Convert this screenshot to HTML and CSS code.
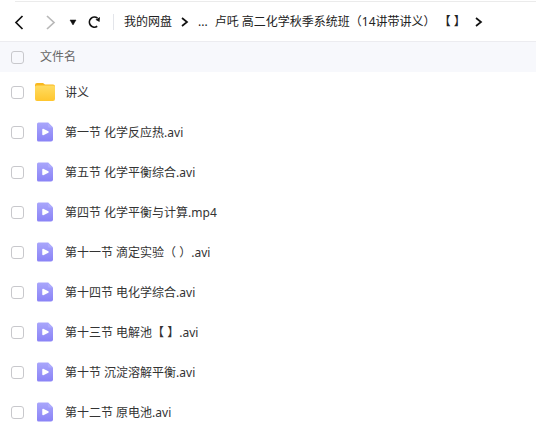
FILE: index.html
```html
<!DOCTYPE html>
<html lang="zh-CN">
<head>
    <meta charset="UTF-8">
    <meta name="viewport" content="width=device-width, initial-scale=1.0">
    <title>我的网盘</title>
    <link rel="stylesheet" href="styles.css">
</head>
<body>

    <!-- 图标 -->
    <svg class="sprite" aria-hidden="true">
        <defs>
            <linearGradient id="video-fill" x1="0" y1="0" x2="0" y2="1">
                <stop offset="0" stop-color="#a9a6fb"/>
                <stop offset="1" stop-color="#8a83f6"/>
            </linearGradient>
            <linearGradient id="folder-fill" x1="0" y1="0" x2="0" y2="1">
                <stop offset="0" stop-color="#ffdc62"/>
                <stop offset="1" stop-color="#ffc62e"/>
            </linearGradient>
            <symbol id="icon-video" viewBox="0 0 20 20">
                <path d="M3.500.500H13L18 5.500v12a2 2 0 0 1-2 2H3.500a1.500 1.500 0 0 1-1.500-1.500V2A1.500 1.500 0 0 1 3.500.500z" fill="url(#video-fill)"/>
                <path d="M13 .500L18 5.500h-3.500A1.500 1.500 0 0 1 13 4z" fill="#aeabfc"/>
                <path d="M8 7.500l5 2.500-5 2.500z" fill="#fff" stroke="#fff" stroke-width="1.500" stroke-linejoin="round"/>
            </symbol>
            <symbol id="icon-folder" viewBox="0 0 20 20">
                <path d="M0 3a2 2 0 0 1 2-2h6l2 1.500h8a2 2 0 0 1 2 2V12H0z" fill="#f9b81e"/>
                <path d="M0 5a1.500 1.500 0 0 1 1.500-1.500h17A1.500 1.500 0 0 1 20 5v12a2 2 0 0 1-2 2H2a2 2 0 0 1-2-2z" fill="url(#folder-fill)"/>
            </symbol>
        </defs>
    </svg>

    <!-- 导航栏 -->
    <header class="toolbar">
        <button class="nav-btn" type="button" aria-label="后退">
            <svg width="12" height="16" viewBox="0 0 12 16"><path d="M10.500 2L4 8.500l6.500 6.500" fill="none" stroke="#111" stroke-width="1.700"/></svg>
        </button>
        <button class="nav-btn nav-forward" type="button" aria-label="前进" disabled>
            <svg width="12" height="16" viewBox="0 0 12 16"><path d="M2 2l7 6.500L2 15" fill="none" stroke="#b8b8b8" stroke-width="1.700"/></svg>
        </button>
        <button class="nav-btn nav-history" type="button" aria-label="历史">
            <svg width="8" height="6" viewBox="0 0 8 6"><path d="M1 1h6L4 6z" fill="#111" stroke="#111" stroke-width=".5"/></svg>
        </button>
        <button class="nav-btn nav-refresh" type="button" aria-label="刷新">
            <svg width="14" height="14" viewBox="0 0 14 14">
                <path d="M10.500 3.200A5 5 0 1 0 10.200 11.300" fill="none" stroke="#111" stroke-width="1.700"/>
                <path d="M13 2l-.5 5L8.500 4.800z" fill="#111"/>
            </svg>
        </button>
        <nav class="breadcrumb" aria-label="路径">
            <a class="crumb-root" href="#">我的网盘</a>
            <svg class="crumb-arrow" width="8" height="10" viewBox="0 0 8 10"><path d="M1 1l5 4-5 4" fill="none" stroke="#111" stroke-width="1.700"/></svg>
            <a class="crumb-more" href="#">...</a>
            <a class="crumb-current" href="#">卢吒 高二化学秋季系统班（14讲带讲义） 【 】</a>
            <svg class="crumb-arrow" width="8" height="10" viewBox="0 0 8 10"><path d="M1 1l5 4-5 4" fill="none" stroke="#111" stroke-width="1.700"/></svg>
        </nav>
    </header>

    <!-- 文件列表 -->
    <table class="file-list">
        <thead>
            <tr>
                <th class="col-check"><input type="checkbox" aria-label="全选"></th>
                <th class="col-title" colspan="2" scope="col">文件名</th>
            </tr>
        </thead>
        <tbody>
            <tr>
                <td class="col-check"><input type="checkbox" id="file-1"></td>
                <td class="col-icon"><svg class="file-icon"><use href="#icon-folder"/></svg></td>
                <td class="col-name"><label for="file-1">讲义</label></td>
            </tr>
            <tr>
                <td class="col-check"><input type="checkbox" id="file-2"></td>
                <td class="col-icon"><svg class="file-icon"><use href="#icon-video"/></svg></td>
                <td class="col-name"><label for="file-2">第一节 化学反应热.avi</label></td>
            </tr>
            <tr>
                <td class="col-check"><input type="checkbox" id="file-3"></td>
                <td class="col-icon"><svg class="file-icon"><use href="#icon-video"/></svg></td>
                <td class="col-name"><label for="file-3">第五节 化学平衡综合.avi</label></td>
            </tr>
            <tr>
                <td class="col-check"><input type="checkbox" id="file-4"></td>
                <td class="col-icon"><svg class="file-icon"><use href="#icon-video"/></svg></td>
                <td class="col-name"><label for="file-4">第四节 化学平衡与计算.mp4</label></td>
            </tr>
            <tr>
                <td class="col-check"><input type="checkbox" id="file-5"></td>
                <td class="col-icon"><svg class="file-icon"><use href="#icon-video"/></svg></td>
                <td class="col-name"><label for="file-5">第十一节 滴定实验（ ）.avi</label></td>
            </tr>
            <tr>
                <td class="col-check"><input type="checkbox" id="file-6"></td>
                <td class="col-icon"><svg class="file-icon"><use href="#icon-video"/></svg></td>
                <td class="col-name"><label for="file-6">第十四节 电化学综合.avi</label></td>
            </tr>
            <tr>
                <td class="col-check"><input type="checkbox" id="file-7"></td>
                <td class="col-icon"><svg class="file-icon"><use href="#icon-video"/></svg></td>
                <td class="col-name"><label for="file-7">第十三节 电解池【 】.avi</label></td>
            </tr>
            <tr>
                <td class="col-check"><input type="checkbox" id="file-8"></td>
                <td class="col-icon"><svg class="file-icon"><use href="#icon-video"/></svg></td>
                <td class="col-name"><label for="file-8">第十节 沉淀溶解平衡.avi</label></td>
            </tr>
            <tr>
                <td class="col-check"><input type="checkbox" id="file-9"></td>
                <td class="col-icon"><svg class="file-icon"><use href="#icon-video"/></svg></td>
                <td class="col-name"><label for="file-9">第十二节 原电池.avi</label></td>
            </tr>
        </tbody>
    </table>

</body>
</html>
```

FILE: styles.css
```css
* {
    box-sizing: border-box;
}

body {
    margin: 0;
    background-color: #fff;
    color: #333;
    font-family: "Noto Sans", "Noto Sans CJK SC", sans-serif;
    font-size: 12px;
    line-height: 16px;
}

svg {
    display: block;
}

.sprite {
    position: absolute;
    width: 0;
    height: 0;
}

/* 导航栏 */
.toolbar {
    display: flex;
    align-items: center;
    height: 42px;
    padding: 3px 12px 0;
    border-bottom: 1px solid #ececf0;
    background: linear-gradient(#ebebeb, #ebebeb) 15px 1px / 100% 1px no-repeat;
}

.nav-btn {
    padding: 0;
    border: 0;
    background: none;
    cursor: pointer;
}

.nav-forward {
    margin-left: 21px;
    cursor: default;
}

.nav-history {
    margin-left: 12px;
}

.nav-refresh {
    margin-left: 10px;
}

.breadcrumb {
    display: flex;
    align-items: center;
    margin-left: 12px;
    padding-left: 10px;
    border-left: 1px solid #e3e5ea;
    white-space: nowrap;
}

.breadcrumb a {
    color: #222;
    text-decoration: none;
}

.crumb-arrow {
    margin: 0 9px;
}

.crumb-current {
    margin-left: 7px;
}

/* 文件列表 */
.file-list {
    width: 100%;
    border-collapse: collapse;
}

.file-list th,
.file-list td {
    padding: 0;
    text-align: left;
    vertical-align: middle;
}

.file-list th {
    height: 30px;
    background-color: #f7f8fc;
    color: #666;
    font-weight: normal;
}

.file-list td {
    height: 40px;
}

.file-list .col-check {
    width: 35px;
    padding-left: 11px;
}

.file-list .col-title {
    padding-left: 5px;
}

.file-list .col-name {
    padding-top: 2px;
}

.col-icon {
    width: 30px;
}

.file-icon {
    width: 20px;
    height: 20px;
}

input[type="checkbox"] {
    display: block;
    appearance: none;
    width: 13px;
    height: 13px;
    margin: 0;
    border: 1px solid #c8c8cc;
    border-radius: 3px;
    background-color: #fff;
}

th input[type="checkbox"] {
    background-color: transparent;
}
```
